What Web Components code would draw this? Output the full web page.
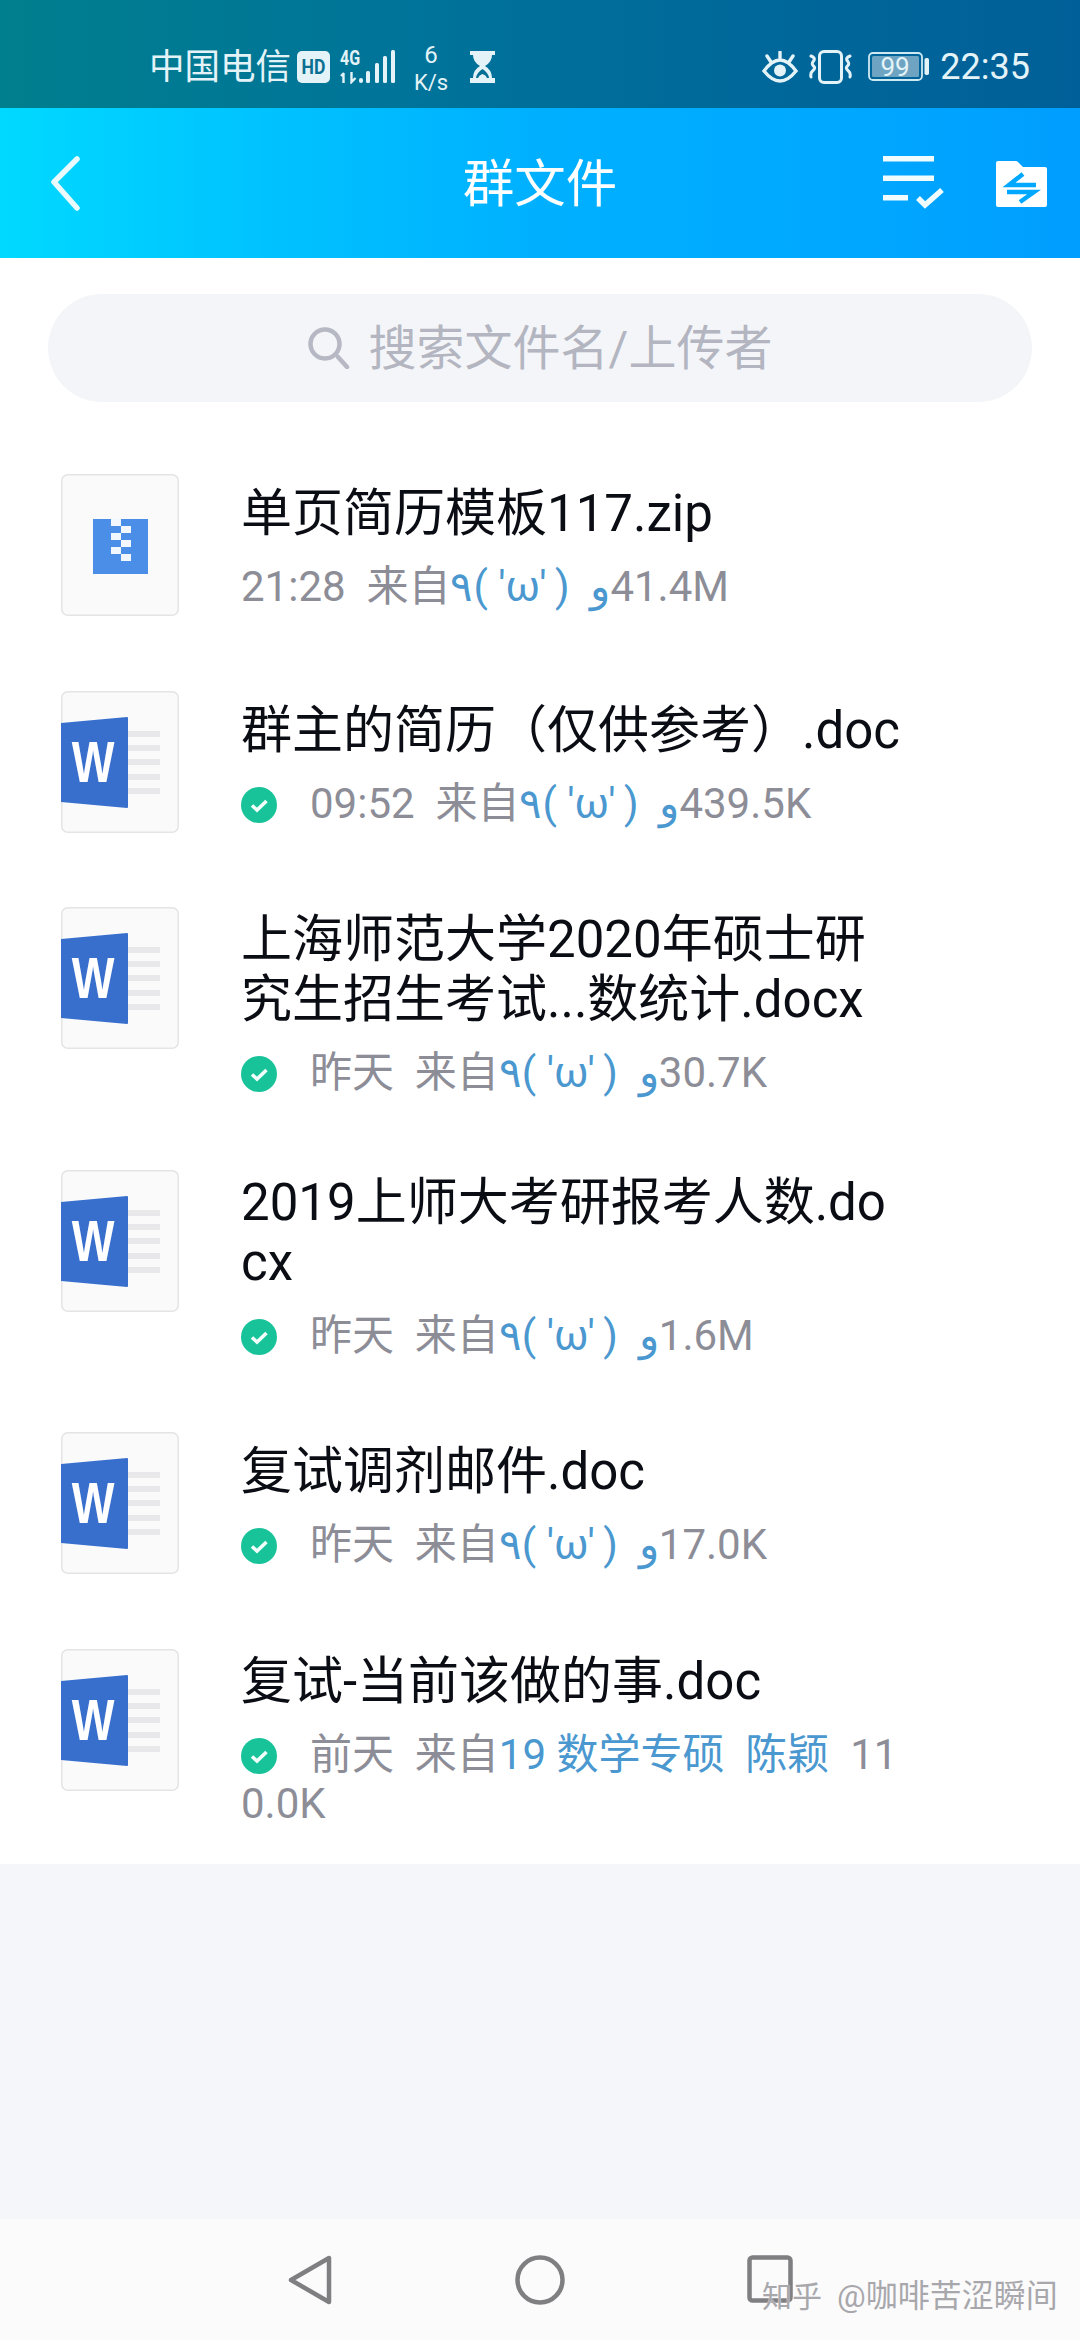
<!DOCTYPE html>
<html lang="zh-CN"><head><meta charset="utf-8"><title>群文件</title>
<style>
html,body{margin:0;padding:0;width:1080px;height:2340px;overflow:hidden}
body{font-family:Roboto,"Noto Sans CJK SC",sans-serif}
</style></head><body>
<group-files></group-files>
<script>
const FONT='Roboto,"Noto Sans CJK SC",sans-serif';
class StatusBar extends HTMLElement{constructor(){super();this.attachShadow({mode:'open'}).innerHTML=`<style>
:host{display:flex;align-items:center;justify-content:space-between;height:108px;box-sizing:border-box;padding:26px 50px 0 149px;color:#e4f3f8;font-family:${FONT};background:linear-gradient(90deg,#007f8e 0%,#00739a 40%,#00689a 70%,#005f98 100%)}
.g{display:flex;align-items:center}
.carrier{font-size:35.500px;line-height:42px;white-space:nowrap}
.speed{display:flex;flex-direction:column;align-items:center;font-size:22px;line-height:27px;width:38px;margin-left:15px;margin-top:4px}
.speed span:first-child{font-size:24px}
.time{font-size:36px;line-height:40px;margin-left:11px}
svg{display:block}
</style>
<div class="g"><span class="carrier">中国电信</span>
<svg width="33" height="32" viewBox="0 0 33 32" style="margin-left:6px"><rect width="33" height="32" rx="5" fill="#e4f3f8"/><text transform="translate(16.500 23) scale(.88 1)" font-family="Roboto" font-weight="700" font-size="20" text-anchor="middle" fill="#0b6f92">HD</text></svg>
<svg width="57" height="34" viewBox="0 0 57 34" style="margin-left:10px" fill="#e4f3f8"><text transform="translate(0 15) scale(.8 1)" font-family="Roboto" font-weight="700" font-size="20">4G</text><path d="M3.500 33V23M1 26l3-3M11.500 22v10l4-4" fill="none" stroke="#e4f3f8" stroke-width="2.400"/><rect x="19" y="28" width="4" height="5" rx="2"/><rect x="26" y="21" width="4" height="12" rx="1.500"/><rect x="35" y="13" width="4" height="20" rx="1.500"/><rect x="43" y="6" width="4" height="27" rx="1.500"/><rect x="51" y="0" width="4" height="33" rx="1.500"/></svg>
<span class="speed"><span>6</span><span>K/s</span></span>
<svg width="25" height="32" viewBox="0 0 25 32" style="margin-left:20px"><path d="M0 0h25v4h-3q0 7-7 11 7 4 7 12h3v5H0v-5h3q0-8 7-12Q3 11 3 4H0z" fill="#e4f3f8"/><path d="M6 27q.5-5 6.500-9 6 4 6.500 9z" fill="#066f94"/><path d="M8 27q1-3 4.500-4 3.500 1 4.500 4z" fill="#e4f3f8"/></svg>
</div>
<div class="g">
<svg width="36" height="32" viewBox="0 0 36 32" fill="none" stroke="#e4f3f8" stroke-width="3.400"><path d="M2 20q8-11 16-11t16 11q-8 10-16 10T2 20z"/><circle cx="18" cy="19.500" r="6" fill="#e4f3f8" stroke="none"/><path d="M18 1v6M5 5l4 6M31 5l-4 6" stroke-linecap="round"/></svg>
<svg width="43" height="34" viewBox="0 0 43 34" style="margin-left:11px" fill="none" stroke="#e4f3f8" stroke-width="3"><rect x="10.500" y="1.500" width="22" height="31" rx="4.500"/><path d="M2 6q5 2 2.500 5t0 5-.5 4.500T2 27M41 6q-5 2-2.500 5t0 5 .5 4.500 2 6.500" stroke-linecap="round"/></svg>
<svg width="61" height="30" viewBox="0 0 61 30" style="margin-left:16px"><rect x="1" y="1" width="53" height="27" rx="4" fill="none" stroke="#cfe9f3" stroke-width="1.800"/><rect x="4" y="4" width="47" height="21" rx="1.500" fill="#6ea4c2"/><rect x="56.500" y="6" width="4.500" height="17" rx="1.800" fill="#e4f3f8"/><text x="27" y="24" font-family="Roboto" font-size="26" text-anchor="middle" fill="#e4f3f8">99</text></svg>
<span class="time">22:35</span>
</div>`}}
class AppHeader extends HTMLElement{constructor(){super();this.attachShadow({mode:'open'}).innerHTML=`<style>
:host{display:grid;grid-template-columns:1fr auto 1fr;align-items:center;height:150px;box-sizing:border-box;padding:0 33px;color:#fff;font-family:${FONT};background:linear-gradient(90deg,#00d9ff 0%,#00c2ff 25%,#00b0ff 50%,#00a9ff 75%,#009eff 100%)}
.t{font-size:51.500px;line-height:60px;padding-top:4px}
.r{display:flex;justify-content:flex-end;align-items:center;gap:52px}
svg{display:block}
.back{margin-left:17px}
</style>
<svg class="back" width="30" height="56" viewBox="0 0 30 56" fill="none" stroke="#e9fbff" stroke-width="5.500" stroke-linecap="round" stroke-linejoin="round"><path d="M27 4 4 27l23 26"/></svg>
<span class="t">群文件</span>
<div class="r">
<svg width="61" height="55" viewBox="0 0 61 55" fill="#f1fcff"><rect x="0" y="0" width="51" height="5.500"/><rect x="0" y="19.500" width="51" height="5.500"/><rect x="0" y="39" width="25" height="5.500"/><path d="M35 42l7 7 17-15" fill="none" stroke="#f1fcff" stroke-width="5.500"/></svg>
<svg width="51" height="46" viewBox="0 0 51 46" fill="#fff" style="margin-top:2px"><path d="M2 0h18a2 2 0 0 1 1.400.6L27 6h22a2 2 0 0 1 2 2v36a2 2 0 0 1-2 2H2a2 2 0 0 1-2-2V2a2 2 0 0 1 2-2z"/><path d="M40 24H13L27 13M11 31h27L24 41" fill="none" stroke="#00a8ff" stroke-width="4.500"/></svg>
</div>`}}
class SearchBox extends HTMLElement{constructor(){super();this.attachShadow({mode:'open'}).innerHTML=`<style>
:host{display:flex;align-items:center;justify-content:center;gap:19px;height:108px;margin:36px 48px 0 48px;border-radius:54px;background:#f4f5f8;color:#b3b5c0;font:48px/60px ${FONT}}
span{padding-top:2px}
svg{display:block}
</style>
<svg width="42" height="42" viewBox="0 0 42 42" fill="none" stroke="#b6b8c3" stroke-width="4.500"><circle cx="17" cy="17" r="14.500"/><path d="M30 30l9 10" stroke-linecap="round"/></svg><span><slot></slot></span>`}}
class FileIcon extends HTMLElement{constructor(){super();const zip=this.getAttribute('type')==='zip';this.attachShadow({mode:'open'}).innerHTML=`<style>
:host{display:block;width:118px;height:142px;flex:none;margin-top:7px;margin-left:1px}
svg{display:block;overflow:visible}
</style>
<svg width="118" height="142" viewBox="0 0 118 142"><rect x=".75" y=".75" width="116.500" height="140.500" rx="6" fill="#fafafb" stroke="#e4e4e6" stroke-width="1.500"/>${zip?
`<rect x="32" y="45" width="55" height="55" fill="#4a8ee8"/><g fill="#f2f7fe"><rect x="50" y="45" width="10" height="7"/><rect x="60" y="52" width="10" height="7"/><rect x="50" y="59" width="10" height="7"/><rect x="60" y="66" width="10" height="7"/><rect x="50" y="73" width="10" height="7"/><rect x="60" y="80" width="10" height="7"/></g>`:
`<g fill="#e8e8ea"><rect x="67" y="40" width="32" height="6"/><rect x="67" y="54" width="32" height="6"/><rect x="67" y="68" width="32" height="6"/><rect x="67" y="83" width="32" height="6"/><rect x="67" y="97" width="32" height="6"/></g><path d="M0 32 66 26q1 0 1 1v89q0 1-1 1L0 111z" fill="#386fcd"/><text transform="translate(32 91) scale(.78 1)" font-family="Liberation Sans" font-weight="700" font-size="58" text-anchor="middle" fill="#fff">W</text>`}</svg>`}}
class FileRow extends HTMLElement{constructor(){super();const up=this.hasAttribute('uploaded');this.attachShadow({mode:'open'}).innerHTML=`<style>
:host{display:flex;min-height:216.500px;box-sizing:border-box;padding:30px 180px 35.500px 60px;font-family:${FONT}}
.b{margin-left:62px;flex:1;min-width:0;align-self:center;padding-top:10px;word-break:break-all}
.t{font-size:51px;line-height:60px;color:#0b0d14}
.s{margin-top:18px;font-size:42px;line-height:49px;color:#8c8d97;white-space:pre-wrap}
.c{display:inline-block;vertical-align:-5px;width:36px;height:36px;margin-right:33px}
svg{display:block}
::slotted([slot=who]){color:#4a98cf;unicode-bidi:bidi-override;direction:ltr}
::slotted(.k){letter-spacing:-1px}
</style>
<slot name="icon"></slot>
<div class="b"><div class="t"><slot name="title"></slot></div>
<div class="s">${up?'<span class="c"><svg width="36" height="36" viewBox="0 0 36 36"><circle cx="18" cy="18" r="18" fill="#19c39a"/><path d="M11 18.500l5 4.500 9.500-9" fill="none" stroke="#f2fffb" stroke-width="3.600"/></svg></span>':''}<slot name="when"></slot>  来自<slot name="who"></slot><slot name="size"></slot></div></div>`}}
class NavBar extends HTMLElement{constructor(){super();this.attachShadow({mode:'open'}).innerHTML=`<style>
:host{display:flex;justify-content:center;align-items:flex-start;height:121px;box-sizing:border-box;padding:36px 0 0 0;background:#fbfbfc;position:relative;font-family:${FONT}}
.i{width:230px;display:flex;justify-content:center}
svg{display:block}
.w{position:absolute;left:762px;top:57px;font-size:32px;line-height:40px;color:#a8a8ac;white-space:nowrap;text-shadow:0 0 1px #fff}
.w b{font-weight:400;font-size:30px;margin-right:15px}
</style>
<div class="i"><svg width="44" height="50" viewBox="0 0 44 50"><path d="M41 3v44L3 25z" fill="none" stroke="#7f7f82" stroke-width="4.500" stroke-linejoin="round"/></svg></div>
<div class="i"><svg width="50" height="50" viewBox="0 0 50 50"><circle cx="25" cy="25" r="22.500" fill="none" stroke="#7f7f82" stroke-width="4.500"/></svg></div>
<div class="i"><svg width="46" height="48" viewBox="0 0 46 48"><rect x="2.500" y="2.500" width="41" height="43" rx="3" fill="none" stroke="#7f7f82" stroke-width="4.500"/></svg></div>
<span class="w"><b>知乎</b>@咖啡苦涩瞬间</span>`}}
class GroupFiles extends HTMLElement{constructor(){super();
const K=`٩( 'ω' )  و`;
const rows=[
['单页简历模板117.zip','21:28',K,'41.4M',false,'zip'],
['群主的简历（仅供参考）.doc','09:52',K,'439.5K',true],
['上海师范大学2020年硕士研究生招生考试...数统计.docx','昨天',K,'30.7K',true],
['2019上师大考研报考人数.docx','昨天',K,'1.6M',true],
['复试调剂邮件.doc','昨天',K,'17.0K',true],
['复试-当前该做的事.doc','前天','19 数学专硕  陈颖  ','110.0K',true]];
this.attachShadow({mode:'open'}).innerHTML=`<style>
:host{display:flex;flex-direction:column;width:1080px;height:2340px;background:#f4f6fa}
main{background:#fff;display:flex;flex-direction:column;height:1606px}
.list{margin-top:35px;display:flex;flex-direction:column}
.sp{flex:1}
</style>
<status-bar></status-bar><app-header></app-header>
<main><search-box>搜索文件名/上传者</search-box><div class="list">
${rows.map(r=>`<file-row ${r[4]?'uploaded':''}><file-icon slot="icon" type="${r[5]||'doc'}"></file-icon><span slot="title">${r[0]}</span><span slot="when">${r[1]}</span><span slot="who" class="${r[2]===K?'k':''}">${r[2]}</span><span slot="size">${r[3]}</span></file-row>`).join('')}
</div></main><div class="sp"></div><nav-bar></nav-bar>`}}
customElements.define('status-bar',StatusBar);
customElements.define('app-header',AppHeader);
customElements.define('search-box',SearchBox);
customElements.define('file-icon',FileIcon);
customElements.define('file-row',FileRow);
customElements.define('nav-bar',NavBar);
customElements.define('group-files',GroupFiles);
</script></body></html>
